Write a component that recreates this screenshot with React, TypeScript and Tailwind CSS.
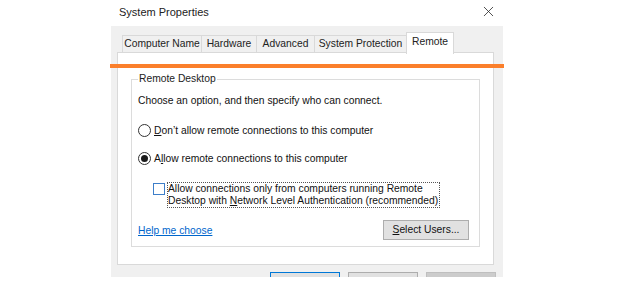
import { X } from "lucide-react";

const TABS = [
  { label: "Computer Name", width: "w-[80px]" },
  { label: "Hardware", width: "w-[56px]" },
  { label: "Advanced", width: "w-[59px]" },
  { label: "System Protection", width: "w-[93px]" },
];

function Radio({ checked }: { checked?: boolean }) {
  return (
    <span className="flex h-[13px] w-[13px] shrink-0 items-center justify-center rounded-full border border-[#333] bg-white">
      {checked && <span className="h-[7px] w-[7px] rounded-full bg-[#1a1a1a]" />}
    </span>
  );
}

export default function App() {
  return (
    <div className="relative h-[295px] w-[620px] overflow-hidden bg-white font-['Liberation_Sans',Arial,sans-serif] text-[10.3px] leading-[12px] text-[#111]">
      <div className="ml-[111px] flex h-[277px] w-[392px] flex-col overflow-hidden bg-[#f0f0f0]">
        {/* title bar */}
        <div className="flex h-[26px] shrink-0 items-center justify-between bg-white pl-2 pr-[6px]">
          <span className="mb-[2px] text-[11px] text-[#222]">System Properties</span>
          <X className="mb-[3px] h-[17px] w-[17px] text-[#222]" strokeWidth={1.1} />
        </div>

        {/* tabs */}
        <div className="ml-[11px] mt-[6px] flex h-[21px] shrink-0 items-end">
          {TABS.map((t) => (
            <div
              key={t.label}
              className={`${t.width} -mr-px flex h-[18px] items-center justify-center border border-[#d9d9d9] bg-[#f0f0f0] text-[#222]`}
            >
              {t.label}
            </div>
          ))}
          <div className="relative z-10 -mb-px flex h-[22px] w-[48px] items-start justify-center border border-b-0 border-[#d9d9d9] bg-white pt-[3px] text-[#222]">
            Remote
          </div>
        </div>

        {/* tab panel */}
        <div className="-mt-px ml-[6px] mr-[9px] h-[213px] shrink-0 border border-[#d9d9d9] bg-white px-[13px] pt-[20px]">
          <fieldset className="h-[174px] border border-[#dcdcdc] pl-[6px] pr-[9px]">
            <legend className="px-[1px] text-[#222]">Remote Desktop</legend>
            <p className="mt-[10px]">Choose an option, and then specify who can connect.</p>

            <div className="mt-[17px] flex items-center gap-[3px]">
              <Radio />
              <span>
                <span className="underline">D</span>on’t allow remote connections to this computer
              </span>
            </div>

            <div className="mt-[15px] flex items-center gap-[3px]">
              <Radio checked />
              <span>
                A<span className="underline">l</span>low remote connections to this computer
              </span>
            </div>

            <div className="ml-[15px] mt-[17px] flex items-start gap-[2px]">
              <span className="mt-px h-[12px] w-[12px] shrink-0 border border-[#3d7ec9] bg-white" />
              <span className="border border-dotted border-[#555] pr-px">
                Allow connections only from computers running Remote
                <br />
                Desktop with <span className="underline">N</span>etwork Level Authentication (recommended)
              </span>
            </div>

            <div className="mt-[12px] flex items-center justify-between">
              <a className="mt-px text-[#0066cc] underline">Help me choose</a>
              <button className="mr-px flex h-[20px] w-[86px] items-center justify-center border border-[#adadad] bg-[#e1e1e1] text-[#111]">
                <span>
                  <span className="underline">S</span>elect Users...
                </span>
              </button>
            </div>
          </fieldset>
        </div>

        {/* dialog buttons (cut off) */}
        <div className="mt-[7px] flex shrink-0 justify-end gap-[8px] pr-[7px]">
          <div className="h-[21px] w-[70px] border border-[#0078d7] bg-[#e1e1e1]" />
          <div className="h-[21px] w-[70px] border border-[#adadad] bg-[#e1e1e1]" />
          <div className="h-[21px] w-[70px] border border-[#bfbfbf] bg-[#cccccc]" />
        </div>
      </div>

      {/* annotation line */}
      <div className="absolute left-[110px] top-[64px] h-[4px] w-[394px] bg-[#fb7f2b]" />
    </div>
  );
}
